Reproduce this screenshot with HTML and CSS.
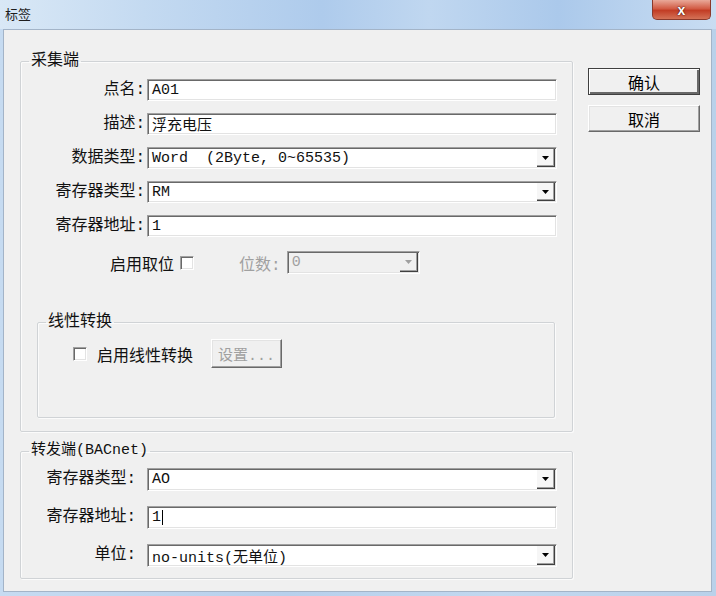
FILE: index.html
```html
<!DOCTYPE html>
<html lang="zh-CN">
<head>
  <meta charset="UTF-8" />
  <title>标签</title>
  <link rel="stylesheet" href="styles.css">
</head>
<body>
<div class="window">
  <div class="titlebar">
    <span class="title">标签</span>
    <button class="close">x</button>
  </div>
  <div class="client">
    <div class="main">
      <fieldset class="group group--collect">
        <legend>采集端</legend>
        <div class="form-grid">
          <label class="form__title">点名:</label>
          <div class="field">A01</div>
          <label class="form__title">描述:</label>
          <div class="field">浮充电压</div>
          <label class="form__title">数据类型:</label>
          <div class="combo">
            <span class="combo__value">Word  (2Byte, 0~65535)</span>
            <span class="combo__arrow"><svg width="7" height="4" viewBox="0 0 7 4"><path d="M0 0h7L3.5 4z" /></svg></span>
          </div>
          <label class="form__title">寄存器类型:</label>
          <div class="combo">
            <span class="combo__value">RM</span>
            <span class="combo__arrow"><svg width="7" height="4" viewBox="0 0 7 4"><path d="M0 0h7L3.5 4z" /></svg></span>
          </div>
          <label class="form__title">寄存器地址:</label>
          <div class="field">1</div>
          <div class="bit-row">
            <span>启用取位</span>
            <span class="check"></span>
            <span class="bit-row__label">位数:</span>
            <div class="combo combo--disabled combo--small">
              <span class="combo__value">0</span>
              <span class="combo__arrow"><svg width="7" height="4" viewBox="0 0 7 4"><path d="M0 0h7L3.5 4z" /></svg></span>
            </div>
          </div>
        </div>
        <fieldset class="group group--linear">
          <legend>线性转换</legend>
          <div class="linear-row">
            <span class="check"></span>
            <span class="linear-row__text">启用线性转换</span>
            <button class="btn btn--disabled btn--small">设置...</button>
          </div>
        </fieldset>
      </fieldset>
      <fieldset class="group group--forward">
        <legend>转发端(BACnet)</legend>
        <div class="form-grid form-grid--wide">
          <label class="form__title">寄存器类型:</label>
          <div class="combo">
            <span class="combo__value">AO</span>
            <span class="combo__arrow"><svg width="7" height="4" viewBox="0 0 7 4"><path d="M0 0h7L3.5 4z" /></svg></span>
          </div>
          <label class="form__title">寄存器地址:</label>
          <div class="field">1<span class="caret"></span></div>
          <label class="form__title">单位:</label>
          <div class="combo">
            <span class="combo__value">no-units(无单位)</span>
            <span class="combo__arrow"><svg width="7" height="4" viewBox="0 0 7 4"><path d="M0 0h7L3.5 4z" /></svg></span>
          </div>
        </div>
      </fieldset>
    </div>
    <div class="actions">
      <button class="btn btn--default">确认</button>
      <button class="btn">取消</button>
    </div>
  </div>
</div>
</body>
</html>
```

FILE: styles.css
```css
* {
  box-sizing: border-box;
}
html, body {
  margin: 0;
}
body {
  font-family: "Liberation Mono", "Noto Sans CJK SC", monospace;
  font-size: 15px;
  color: #111;
  background: #c3d8ee;
}
.window {
  width: 716px;
  height: 596px;
  display: flex;
  flex-direction: column;
  padding: 0 4px 4px 3px;
  background: linear-gradient(to right, #c6dbf1, #b7d0ec 40%, #c2d8ef 70%, #b9d1ea);
}
.titlebar {
  height: 29px;
  display: flex;
  align-items: flex-start;
  justify-content: space-between;
  margin: 0 -4px 0 -3px;
  padding: 0 5px 0 5px;
  background: linear-gradient(to right, #d9e8f6 0%, #c4daf1 20%, #aecbec 45%, #c0d7f0 60%, #abc9eb 78%, #c9ddf2 100%);
}
.title {
  font-family: "Noto Sans CJK SC", sans-serif;
  font-size: 13px;
  line-height: 28px;
  color: #1e1e1e;
}
.close {
  width: 59px;
  height: 20px;
  padding: 0;
  border: 1px solid #8a3a2c;
  border-top: 0;
  border-radius: 0 0 5px 5px;
  background: linear-gradient(#e9a999, #d25c45 45%, #c23d25 55%, #d47257);
  color: #fff;
  font: bold 14px "Liberation Sans", sans-serif;
  line-height: 18px;
  text-shadow: 0 0 2px #4a1208, 0 0 1px #4a1208;
}
.client {
  flex: 1;
  display: flex;
  gap: 15px;
  padding: 22px 11px 0 16px;
  background: #f0f0f0;
  border: 1px solid #a3b4c8;
}
.main {
  width: 553px;
  display: flex;
  flex-direction: column;
  gap: 10px;
}

/* group box */
.group {
  margin: 0;
  min-width: 0;
  padding: 9px 15px 13px 5px;
  border: 1px solid #d0d3d6;
  border-radius: 2px;
  box-shadow: inset 1px 1px #fbfbfb, 1px 1px #fbfbfb;
}
.group legend {
  margin-left: 3px;
  padding: 0 2px;
  line-height: 18px;
  font-size: 16px;
}
.group--linear {
  margin: 42px 2px 0 11px;
  padding: 8px 10px 49px 5px;
}
.group--forward {
  padding: 8px 15px 11px 5px;
}
.group--forward legend {
  font-size: 15px;
}

.form-grid {
  display: grid;
  grid-template-columns: 119px 1fr;
  column-gap: 2px;
  row-gap: 12px;
  grid-auto-rows: 22px;
}
.form-grid--wide {
  grid-template-columns: 110px 1fr;
  column-gap: 11px;
  row-gap: 15px;
  grid-auto-rows: 23px;
}
.form__title {
  text-align: right;
  white-space: nowrap;
  line-height: 22px;
  font-size: 16px;
}

/* sunken text field */
.field, .combo {
  display: flex;
  align-items: center;
  background: #fff;
  border: 1px solid;
  border-color: #a0a0a0 #fff #fff #a0a0a0;
  box-shadow: inset 1px 1px #696969, inset -1px -1px #e3e3e3;
  padding-left: 4px;
  white-space: pre;
}
.caret {
  width: 1px;
  height: 15px;
  margin-left: 1px;
  background: #000;
}
.combo__value {
  flex: 1;
}
.combo__arrow {
  width: 18px;
  align-self: stretch;
  margin: 1px 1px 1px 0;
  display: flex;
  align-items: center;
  justify-content: center;
  background: #f6f6f6;
  border-right: 1px solid #404040;
  border-bottom: 1px solid #404040;
  box-shadow: inset -1px -1px #a0a0a0;
}
.combo__arrow svg {
  fill: #000;
}
.combo--disabled {
  background: #f0f0f0;
  color: #a0a0a0;
}
.combo--disabled .combo__arrow {
  background: #f0f0f0;
}
.combo--disabled .combo__arrow svg {
  fill: #a0a0a0;
}
.combo--small {
  width: 133px;
  height: 23px;
}

.bit-row {
  grid-column: 1 / -1;
  margin-top: 2px;
  padding-left: 84px;
  display: flex;
  align-items: center;
  height: 23px;
  font-size: 16px;
}
.bit-row .check {
  margin-left: 6px;
}
.bit-row__label {
  margin: 0 6px 0 45px;
  color: #a0a0a0;
}
.bit-row .combo {
  font-size: 15px;
}

/* checkbox */
.check {
  width: 14px;
  height: 14px;
  background: #fff;
  border: 1px solid;
  border-color: #a0a0a0 #fff #fff #a0a0a0;
  box-shadow: inset 1px 1px #696969, inset -1px -1px #e3e3e3;
}

.linear-row {
  display: flex;
  align-items: center;
  padding-left: 30px;
  height: 29px;
}
.linear-row__text {
  margin: 0 18px 0 10px;
  font-size: 16px;
}

/* buttons */
.actions {
  width: 112px;
  margin-top: 16px;
  display: flex;
  flex-direction: column;
  gap: 10px;
}
.btn {
  height: 27px;
  padding: 0;
  font-family: inherit;
  font-size: 16px;
  color: #000;
  background: #f0f0f0;
  border: 1px solid;
  border-color: #fff #696969 #696969 #fff;
  box-shadow: inset -1px -1px #a0a0a0, inset 1px 1px #e3e3e3;
}
.btn--default {
  border-color: #404040;
  box-shadow: inset 1px 1px #fff, inset -2px -2px #696969, inset -1px -1px #a0a0a0;
}
.btn--small {
  width: 71px;
  height: 29px;
  font-size: 15px;
}
.btn--disabled {
  color: #a0a0a0;
}
```
